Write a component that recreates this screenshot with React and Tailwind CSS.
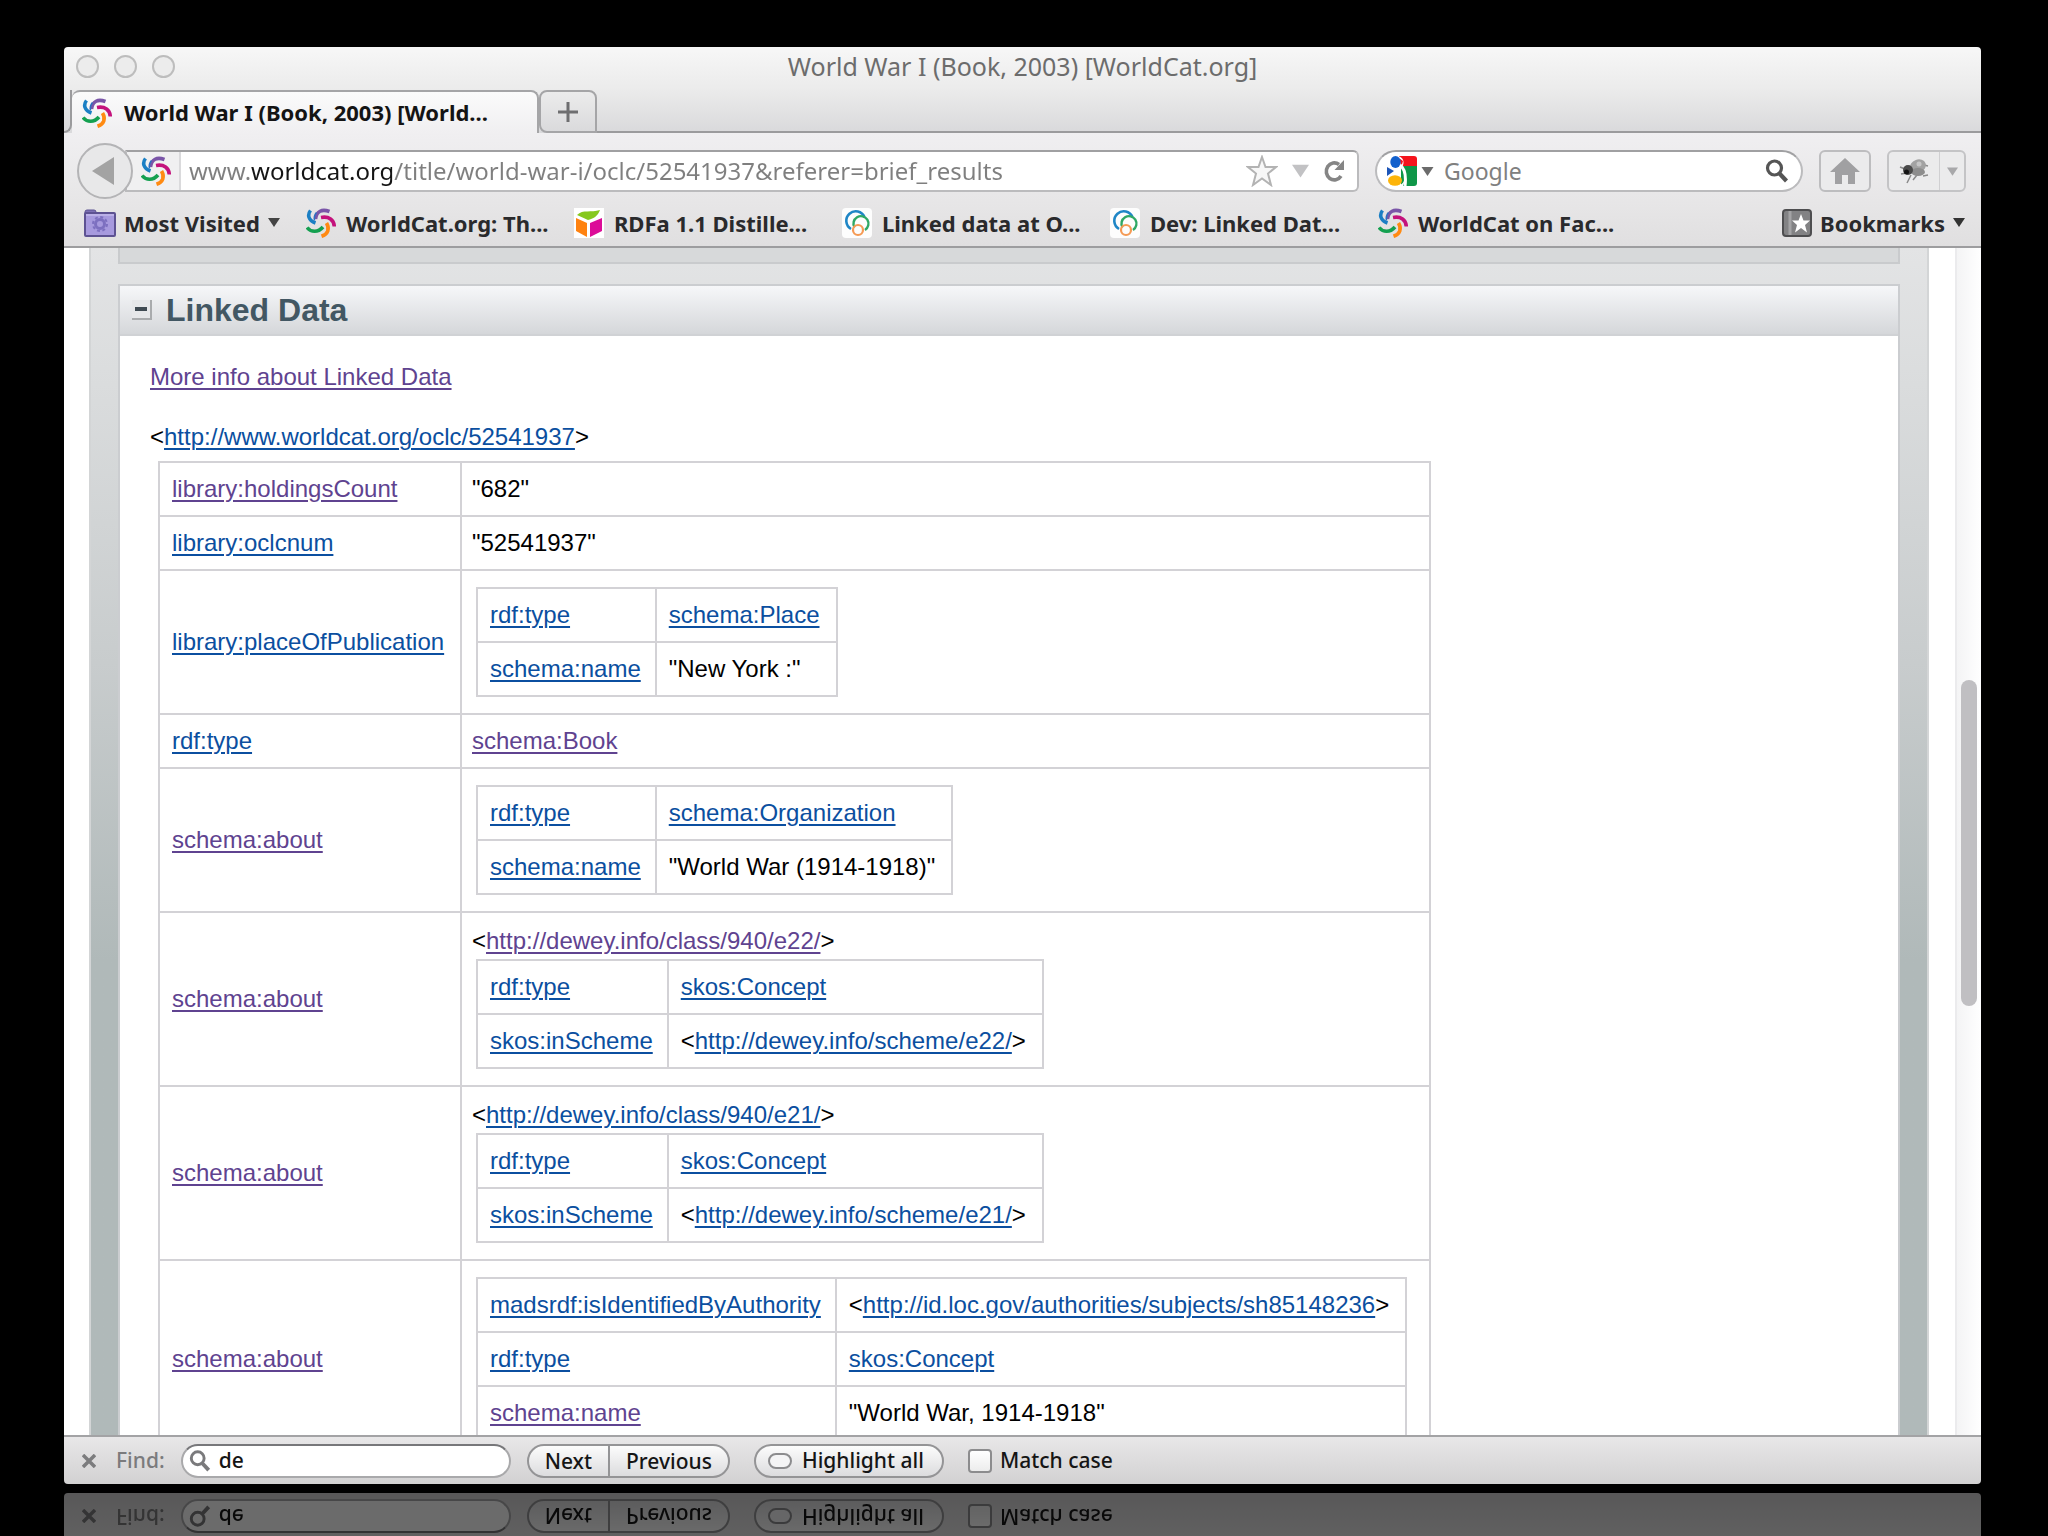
import { useId, useState } from 'react';

const BOOKMARKS = [
  { label: 'WorldCat.org: Th...', icon: 'swirl' },
  { label: 'RDFa 1.1 Distille...', icon: 'cube' },
  { label: 'Linked data at O...', icon: 'rings' },
  { label: 'Dev: Linked Dat...', icon: 'rings' },
  { label: 'WorldCat on Fac...', icon: 'swirl' },
];

// value is one of: { text }, { link }, { uri }, or a nested { rows } with an optional uri above it
const TRIPLES = [
  { name: 'library:holdingsCount', visited: true, value: { text: '"682"' } },
  { name: 'library:oclcnum', value: { text: '"52541937"' } },
  {
    name: 'library:placeOfPublication',
    value: {
      rows: [
        { name: 'rdf:type', value: { link: 'schema:Place' } },
        { name: 'schema:name', value: { text: '"New York :"' } },
      ],
    },
  },
  { name: 'rdf:type', value: { link: 'schema:Book', visited: true } },
  {
    name: 'schema:about',
    visited: true,
    value: {
      rows: [
        { name: 'rdf:type', value: { link: 'schema:Organization' } },
        { name: 'schema:name', value: { text: '"World War (1914-1918)"' } },
      ],
    },
  },
  {
    name: 'schema:about',
    visited: true,
    value: {
      uri: 'http://dewey.info/class/940/e22/',
      visited: true,
      rows: [
        { name: 'rdf:type', value: { link: 'skos:Concept' } },
        { name: 'skos:inScheme', value: { uri: 'http://dewey.info/scheme/e22/' } },
      ],
    },
  },
  {
    name: 'schema:about',
    visited: true,
    value: {
      uri: 'http://dewey.info/class/940/e21/',
      rows: [
        { name: 'rdf:type', value: { link: 'skos:Concept' } },
        { name: 'skos:inScheme', value: { uri: 'http://dewey.info/scheme/e21/' } },
      ],
    },
  },
  {
    name: 'schema:about',
    visited: true,
    value: {
      rows: [
        {
          name: 'madsrdf:isIdentifiedByAuthority',
          value: { uri: 'http://id.loc.gov/authorities/subjects/sh85148236' },
        },
        { name: 'rdf:type', value: { link: 'skos:Concept' } },
        { name: 'schema:name', visited: true, value: { text: '"World War, 1914-1918"' } },
      ],
    },
  },
];

function SwirlIcon() {
  return (
    <svg viewBox="0 0 30 30" className="size-[30px] shrink-0" fill="none" strokeWidth="3.6">
      <path d="M4.500 2.500C1 7 2.500 12.500 9.500 15" stroke="#1b7fc4" />
      <path d="M23.500 3.500C16 .8 10.500 3 9.500 11" stroke="#7a55a8" />
      <path d="M10.500 4.500C8.500 6.500 8 9 8.500 12.500" stroke="#2f6fc0" strokeWidth="1.600" />
      <path d="M28.300 18.500C28 12 23 8 15 9.500" stroke="#c4127c" />
      <path d="M15.500 28.300C22 26 24 21 20.500 15" stroke="#ff8a12" />
      <path d="M1 19.500C5 24.500 12 24.800 17 19" stroke="#14a050" />
    </svg>
  );
}

function CubeIcon() {
  return (
    <svg viewBox="0 0 30 30" className="size-[30px] shrink-0">
      <rect width="30" height="30" fill="#fff" />
      <path d="M3 7C9 1 17 5 26 2C24 8 19 11 14 12Z" fill="#86c81e" />
      <path d="M2 10L13 15V29L2 23Z" fill="#ff8210" />
      <path d="M16 15L28 10V23L16 29Z" fill="#dc0c98" />
    </svg>
  );
}

function RingsIcon() {
  return (
    <svg viewBox="0 0 30 30" className="size-[30px] shrink-0" fill="none">
      <rect width="30" height="30" rx="4" fill="#fdfdfd" />
      <path d="M9 21A9.500 9.500 0 1 1 22.500 9" stroke="#1f86c6" strokeWidth="2.600" />
      <path d="M12.500 19.500A7.500 7.500 0 1 1 23 22" stroke="#2fa865" strokeWidth="2.400" />
      <circle cx="16" cy="22" r="5" stroke="#f59a54" strokeWidth="2.200" />
    </svg>
  );
}

function BookmarkIcon({ icon }) {
  if (icon === 'cube') return <CubeIcon />;
  if (icon === 'rings') return <RingsIcon />;
  return <SwirlIcon />;
}

function FolderIcon() {
  return (
    <svg viewBox="0 0 32 28" className="h-[28px] w-[32px] shrink-0">
      <path d="M1 5V3Q1 1 3 1H10Q12 1 12 3V5Z" fill="#7d70b4" stroke="#5d5292" />
      <rect x="1" y="4" width="30" height="23" rx="1" fill="#a79ade" stroke="#5d5292" strokeWidth="2" />
      <path d="M2 6H30" stroke="#d0c8f2" />
      <circle cx="16" cy="15" r="4.500" fill="none" stroke="#7d70c0" strokeWidth="3" />
      <circle cx="16" cy="15" r="7" fill="none" stroke="#7d70c0" strokeWidth="2" strokeDasharray="3 2.500" />
    </svg>
  );
}

function GoogleIcon() {
  return (
    <svg viewBox="0 0 30 30" className="size-[30px] shrink-0">
      <path d="M12 0H27Q30 0 30 3V10H14Z" fill="#f5141c" />
      <path d="M14 10H30V27Q30 30 27 30H14Z" fill="#0e9648" />
      <path d="M0 11L7 15L0 20Z" fill="#1c55b8" />
      <path d="M9 0C18 0 18 9 14 12C20 15 20 30 9 30H16L18 24L17 16L14 12L16 5Z" fill="#fff" />
      <path d="M13 9Q20 14 18 30" fill="none" stroke="#fff" strokeWidth="3" />
      <ellipse cx="8.500" cy="6" rx="5.200" ry="6" fill="#1260cc" />
      <ellipse cx="8" cy="24.500" rx="7" ry="5.200" fill="#fdb409" />
    </svg>
  );
}

function BugIcon() {
  return (
    <svg viewBox="0 0 30 26" className="h-[26px] w-[30px] shrink-0">
      <path d="M1 9L6 11M2 16L8 15M8 25L12 17M14 22L18 17M24 18L29 17M25 7L29 8" stroke="#8a8a8a" strokeWidth="1.500" />
      <ellipse cx="19" cy="8" rx="8" ry="6.500" fill="#a2a2a2" transform="rotate(-20 19 8)" />
      <ellipse cx="19" cy="14" rx="7" ry="4" fill="#8d8d8d" />
      <circle cx="9" cy="12" r="5" fill="#4a4a4a" />
      <circle cx="7.500" cy="14" r="2.500" fill="#141414" />
      <circle cx="20" cy="6" r="2.500" fill="#c6c6c6" />
    </svg>
  );
}

function MagnifierIcon({ className }) {
  return (
    <svg viewBox="0 0 24 24" className={className} fill="none" stroke="currentColor">
      <circle cx="9.500" cy="9" r="7" strokeWidth="3.200" />
      <path d="M14.500 14.500L21.500 22" strokeWidth="4.200" />
    </svg>
  );
}

function Caret({ className }) {
  return (
    <svg viewBox="0 0 12 9" className={className} fill="currentColor">
      <path d="M0 0H12L6 9Z" />
    </svg>
  );
}

function TitleBar() {
  return (
    <header className="flex h-[86px] flex-col justify-between rounded-t bg-linear-to-b from-[#f7f7f7] via-[#ebebeb] to-[#d9d9db]">
      <div className="flex h-[38px] items-center px-3">
        <div className="flex flex-1 gap-[15px]">
          <button type="button" aria-label="Close" className="size-[23px] rounded-full border-2 border-[#bdbdbd] bg-[#ececec]" />
          <button type="button" aria-label="Minimize" className="size-[23px] rounded-full border-2 border-[#bdbdbd] bg-[#ececec]" />
          <button type="button" aria-label="Zoom" className="size-[23px] rounded-full border-2 border-[#bdbdbd] bg-[#ececec]" />
        </div>
        <h1 className="text-[25px] leading-8 text-[#6c6c6c]">World War I (Book, 2003) [WorldCat.org]</h1>
        <div className="flex-1" />
      </div>
      <div className="flex h-[43px] items-stretch" role="tablist">
        <div className="w-2 rounded-br-lg border-r-2 border-b-2 border-[#9b9b9d]" />
        <button
          type="button"
          role="tab"
          aria-selected="true"
          className="flex w-[467px] items-center gap-3 rounded-t-lg border-t-2 border-r-2 border-[#a5a5a7] bg-linear-to-b from-[#fbfbfb] to-[#f0eff1] px-2.5 text-[22px] font-bold text-[#141414]"
        >
          <SwirlIcon />
          <span className="truncate">World War I (Book, 2003) [World...</span>
        </button>
        <button
          type="button"
          aria-label="New tab"
          className="flex w-[58px] items-center justify-center rounded-t-lg rounded-bl-lg border-2 border-[#a5a5a7] bg-linear-to-b from-[#ececec] to-[#dadadc]"
        >
          <svg viewBox="0 0 20 20" className="size-5" stroke="#6e6e70" strokeWidth="3">
            <path d="M10 0V20M0 10H20" />
          </svg>
        </button>
        <div className="flex-1 border-b-2 border-[#9b9b9d]" />
      </div>
    </header>
  );
}

function NavBar() {
  return (
    <nav className="flex h-[76px] items-center bg-linear-to-b from-[#f0eff1] to-[#e6e5e6] pr-[15px] pl-[13px]">
      <button
        type="button"
        aria-label="Back"
        className="z-10 flex size-[56px] shrink-0 items-center justify-center rounded-full border-2 border-[#b4b4b6] bg-[#e8e8e9] pr-1"
      >
        <svg viewBox="0 0 22 28" className="h-[28px] w-[22px]">
          <path d="M22 0V28L0 14Z" fill="#a3a3a3" />
        </svg>
      </button>
      <div className="-ml-2 flex h-[42px] flex-1 items-center rounded-r-md border-2 border-t-[#a0a0a2] border-[#bbbbbd] bg-white pr-3">
        <div className="flex h-full w-[54px] items-center justify-end border-r-2 border-[#dadadc] bg-[#f0f0f1] pr-2">
          <SwirlIcon />
        </div>
        {/* grey url with the host part in black */}
        <input
          type="text"
          aria-label="Address"
          defaultValue="www.worldcat.org/title/world-war-i/oclc/52541937&referer=brief_results"
          className="min-w-0 flex-1 bg-[linear-gradient(90deg,#7f7f7f_69px,#151515_69px,#151515_211px,#7f7f7f_211px)] bg-clip-text pl-2 text-[24px] text-transparent outline-none"
        />
        <div className="flex items-center gap-3.5">
          <button type="button" aria-label="Bookmark this page">
            <svg viewBox="0 0 32 32" className="size-[32px]" fill="#f7f7f7" stroke="#b3b3b3" strokeWidth="2">
              <path d="M16 2L19.500 12H30L22 18.500L25 30L16 23.500L7 30L10 18.500L2 12H12.500Z" />
            </svg>
          </button>
          <button type="button" aria-label="Show history">
            <Caret className="h-[14px] w-[17px] text-[#c2c2c4]" />
          </button>
          <button type="button" aria-label="Reload">
            <svg viewBox="0 0 22 24" className="h-6 w-[22px]" fill="none">
              <path d="M16 5.500A8 8.500 0 1 0 18 17" stroke="#858585" strokeWidth="3.600" />
              <path d="M21 1V11H11.500Z" fill="#858585" />
            </svg>
          </button>
        </div>
      </div>
      <div className="ml-4 flex h-[42px] w-[428px] items-center rounded-full border-2 border-t-[#a0a0a2] border-[#bbbbbd] bg-white pr-3 pl-2.5">
        <button type="button" aria-label="Choose search engine" className="flex items-center gap-1">
          <GoogleIcon />
          <Caret className="h-[9px] w-[13px] text-[#6b6b6b]" />
        </button>
        <input
          type="search"
          aria-label="Search the web"
          placeholder="Google"
          className="min-w-0 flex-1 pl-2.5 text-[23px] outline-none placeholder:text-[#808080]"
        />
        <button type="button" aria-label="Search">
          <MagnifierIcon className="size-6 text-[#555]" />
        </button>
      </div>
      <button
        type="button"
        aria-label="Home"
        className="ml-4 flex h-[42px] w-[52px] items-center justify-center rounded-md border-2 border-[#bdbdbf] bg-[#ebebec]"
      >
        <svg viewBox="0 0 30 26" className="h-[26px] w-[30px]" fill="#a0a0a2">
          <path d="M15 0L30 14H25V26H18V17H12V26H5V14H0Z" />
        </svg>
      </button>
      <div className="ml-4 flex h-[42px] w-[79px] rounded-md border-2 border-[#c4c4c6] bg-[#ebebec]">
        <button type="button" aria-label="Firebug" className="flex flex-1 items-center justify-center border-r border-[#d0d0d2]">
          <BugIcon />
        </button>
        <button type="button" aria-label="Firebug menu" className="flex w-6 items-center justify-center">
          <Caret className="h-[9px] w-[11px] text-[#a8a8aa]" />
        </button>
      </div>
    </nav>
  );
}

function BookmarksBar() {
  return (
    <div className="flex h-[39px] items-center border-b-2 border-[#9d9d9f] bg-linear-to-b from-[#e6e5e6] to-[#e0dfe0] pr-4 pb-2.5 pl-5 text-[22px] leading-7 font-bold text-[#2a2a2c]">
      <button type="button" className="flex items-center gap-2">
        <FolderIcon />
        Most Visited
        <Caret className="h-[9px] w-[12px] text-[#444]" />
      </button>
      <div className="ml-[26px] flex">
        {BOOKMARKS.map((b) => (
          <a key={b.label} href="#" className="flex w-[268px] items-center gap-2.5 whitespace-nowrap">
            <BookmarkIcon icon={b.icon} />
            {b.label}
          </a>
        ))}
      </div>
      <button type="button" className="ml-auto flex items-center gap-2">
        <svg viewBox="0 0 30 28" className="h-[28px] w-[30px]">
          <rect x="1" y="1" width="28" height="26" rx="3" fill="#828284" stroke="#4e4e50" strokeWidth="2" />
          <path d="M8 2V26" stroke="#a4a4a6" strokeWidth="3" />
          <path d="M19 5L21.500 11.500H28L23 16L25 23.500L19 19L13 23.500L15 16L10 11.500H16.500Z" fill="#fff" />
        </svg>
        Bookmarks
        <Caret className="h-[9px] w-[12px] text-[#333]" />
      </button>
    </div>
  );
}

function RdfLink({ visited, children }) {
  return (
    <a
      href="#"
      className={`underline decoration-2 underline-offset-3 ${visited ? 'text-[#5f4390]' : 'text-[#0b4fa0]'}`}
    >
      {children}
    </a>
  );
}

function Uri({ uri, visited }) {
  return (
    <>
      &lt;<RdfLink visited={visited}>{uri}</RdfLink>&gt;
    </>
  );
}

function Value({ value }) {
  if (value.rows) {
    return (
      <>
        {value.uri && (
          <div className="mt-3 -mb-3.5">
            <Uri uri={value.uri} visited={value.visited} />
          </div>
        )}
        <TripleTable rows={value.rows} nested />
      </>
    );
  }
  if (value.uri) return <Uri uri={value.uri} visited={value.visited} />;
  if (value.link) return <RdfLink visited={value.visited}>{value.link}</RdfLink>;
  return value.text;
}

function TripleTable({ rows, nested }) {
  return (
    <table className={nested ? 'mt-4 mb-4 ml-1 border-collapse' : 'ml-2 w-[1273px] border-collapse'}>
      <tbody>
        {rows.map((row, i) => (
          <tr key={i}>
            <th
              scope="row"
              className={`h-[54px] border-2 border-[#d3d2d6] pl-3 text-left font-normal ${nested ? 'pr-3.5' : 'w-[302px] pr-3'}`}
            >
              <RdfLink visited={row.visited}>{row.name}</RdfLink>
            </th>
            <td className={`h-[54px] border-2 border-[#d3d2d6] ${nested ? 'pr-4 pl-3' : 'px-2.5'}`}>
              <Value value={row.value} />
            </td>
          </tr>
        ))}
      </tbody>
    </table>
  );
}

function LinkedDataPage() {
  return (
    <main className="flex min-h-0 flex-1 bg-white pl-[25px] font-['Liberation_Sans',Arial,sans-serif] text-[24px] leading-8 text-black">
      <div className="flex min-w-0 flex-1 flex-col overflow-hidden border-x-2 border-[#d3d5d6] bg-linear-to-b from-[#e3e4e5] via-[#c8cccd] via-35% to-[#b0b9b9] to-60% px-[27px]">
        <div className="h-4 shrink-0 border-2 border-t-0 border-[#c9cbcd] bg-[#d7d9da]" />
        <section className="mt-5 border-2 border-[#cbcdd0] bg-white">
          <div className="flex h-[50px] items-center gap-3.5 border-b-2 border-[#d0d2d5] bg-linear-to-b from-[#f6f7f9] to-[#d5d7da] px-3">
            <button
              type="button"
              aria-label="Collapse Linked Data"
              className="flex size-5 items-center justify-center border-r-2 border-b-2 border-[#a9abad] bg-[#e6e7e9]"
            >
              <span className="h-1 w-3 bg-[#3f4a52]" />
            </button>
            <h2 className="text-[32px] font-bold text-[#425763]">Linked Data</h2>
          </div>
          <div className="px-[30px] pt-[25px]">
            <p>
              <RdfLink visited>More info about Linked Data</RdfLink>
            </p>
            <p className="mt-7 mb-2">
              <Uri uri="http://www.worldcat.org/oclc/52541937" />
            </p>
            <TripleTable rows={TRIPLES} />
          </div>
        </section>
      </div>
      <div className="relative ml-[26px] w-[26px] border-l-2 border-[#ebebed] bg-linear-to-r from-[#f4f4f5] to-white">
        <div className="absolute top-[36.4%] right-1 h-[27.5%] w-4 rounded-full bg-[#c0bfc2]" />
      </div>
    </main>
  );
}

function FindBar({ query, onQuery, matchCase, onMatchCase }) {
  const id = useId();
  return (
    <div className="flex h-[49px] items-center rounded-b border-t-2 border-[#a3a3a5] bg-linear-to-b from-[#e8e7e8] to-[#d2d1d2] pl-[18px] text-[21px] text-[#151515]">
      <button type="button" aria-label="Close find bar">
        <svg viewBox="0 0 14 14" className="size-[14px]" stroke="#7c7c7e" strokeWidth="3.500">
          <path d="M1 1L13 13M13 1L1 13" />
        </svg>
      </button>
      <label htmlFor={`${id}-q`} className="ml-5 font-medium text-[#7b7b7d]">
        Find:
      </label>
      <div className="ml-4 flex h-[34px] w-[330px] items-center rounded-full border-2 border-t-[#77777a] border-[#a9a9ab] bg-white pl-1.5">
        <MagnifierIcon className="size-[22px] text-[#7a7a7c]" />
        <input
          id={`${id}-q`}
          type="text"
          value={query}
          onChange={(e) => onQuery(e.target.value)}
          className="min-w-0 flex-1 pr-3 pl-2 font-medium outline-none"
        />
      </div>
      <div className="ml-4 flex h-[34px] rounded-full border-2 border-[#949496] bg-linear-to-b from-[#fcfcfc] to-[#dcdcde] font-medium">
        <button type="button" className="border-r-2 border-[#949496] px-4">
          Next
        </button>
        <button type="button" className="px-4">
          Previous
        </button>
      </div>
      <button
        type="button"
        className="ml-6 flex h-[34px] items-center gap-2.5 rounded-full border-2 border-[#949496] bg-linear-to-b from-[#fcfcfc] to-[#dcdcde] pr-[18px] pl-3 font-medium"
      >
        <span className="h-4 w-6 rounded-full border-2 border-[#8c8c8e] bg-[#f4f4f5]" />
        Highlight all
      </button>
      <input
        id={`${id}-case`}
        type="checkbox"
        checked={matchCase}
        onChange={(e) => onMatchCase(e.target.checked)}
        className="ml-6 size-6 appearance-none rounded-sm border-2 border-[#8c8c8e] bg-linear-to-b from-white to-[#ececec] checked:bg-[#6b9be0]"
      />
      <label htmlFor={`${id}-case`} className="ml-2 font-medium">
        Match case
      </label>
    </div>
  );
}

export default function App() {
  const [query, setQuery] = useState('de');
  const [matchCase, setMatchCase] = useState(false);
  const find = { query, onQuery: setQuery, matchCase, onMatchCase: setMatchCase };

  return (
    <div className="flex h-screen flex-col overflow-hidden bg-black pt-[47px] pr-[67px] pl-16 font-['Noto_Sans','Open_Sans',sans-serif]">
      <div className="flex min-h-0 flex-1 flex-col">
        <TitleBar />
        <NavBar />
        <BookmarksBar />
        <LinkedDataPage />
        <FindBar {...find} />
      </div>
      {/* floor reflection of the window's bottom edge */}
      <div className="mt-[9px] h-[43px] shrink-0 overflow-hidden" aria-hidden="true" inert>
        <div className="-scale-y-100 brightness-[.42]">
          <FindBar {...find} />
        </div>
      </div>
    </div>
  );
}
